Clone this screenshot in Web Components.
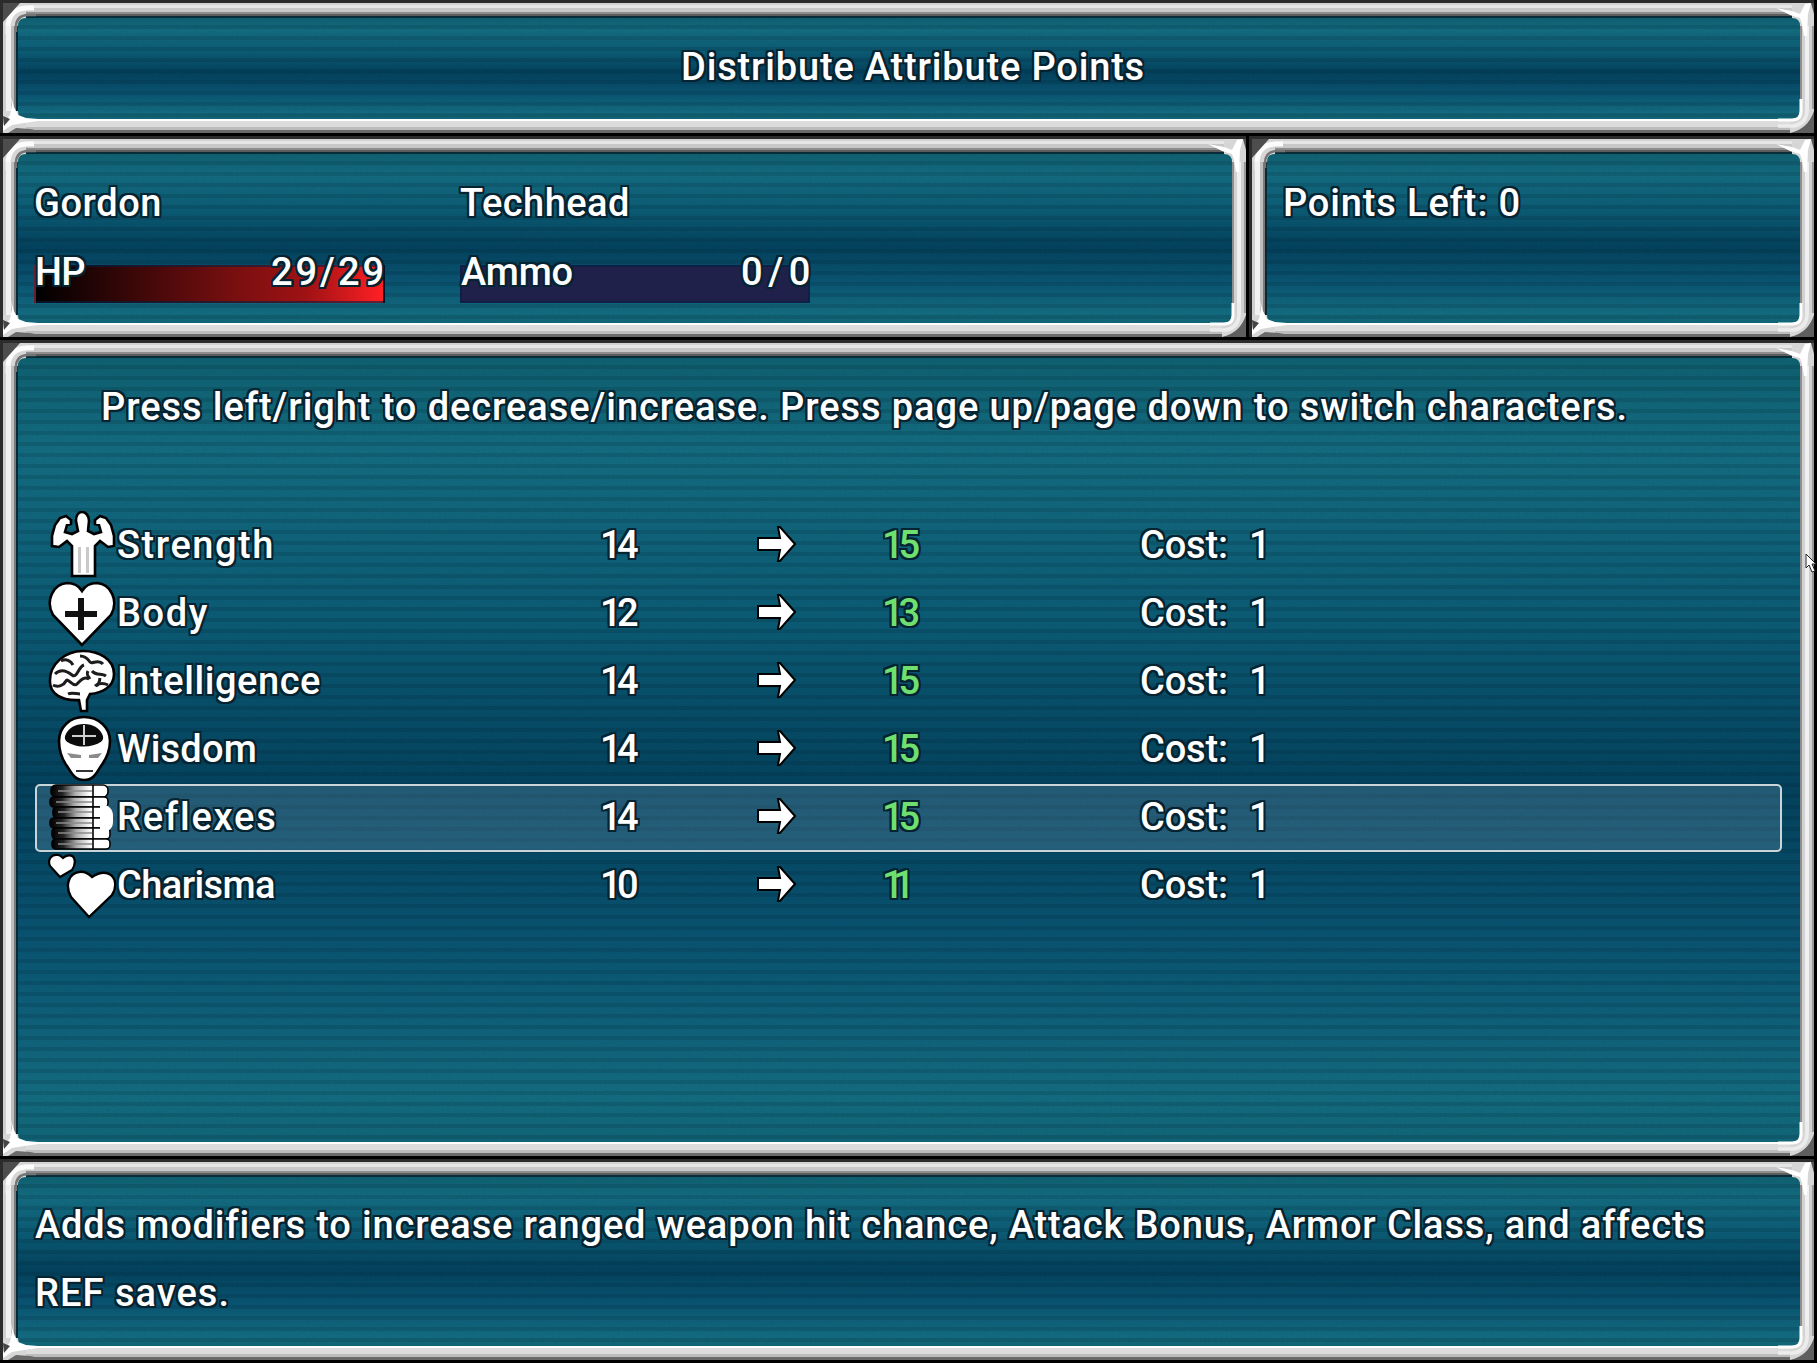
<!DOCTYPE html>
<html>
<head>
<meta charset="utf-8">
<title>Distribute Attribute Points</title>
<style>
  html, body { margin: 0; padding: 0; background: #000; }
  body {
    width: 1817px;
    height: 1363px;
    overflow: hidden;
    color: #fff;
    font: 500 38px Roboto, "Liberation Sans", sans-serif;
  }
  .screen {
    display: grid;
    grid-template-rows: 133px 201px 816px 201px;
    row-gap: 3px;
    width: 1814px;
  }
  .status {
    display: grid;
    grid-template-columns: 1246px 565px;
    column-gap: 3px;
  }
</style>
</head>
<body>
<div class="screen">
  <game-window>
    <div style="text-align:center;padding:27px 0 0 8px;line-height:44px"><game-text width="464">Distribute Attribute Points</game-text></div>
  </game-window>

  <div class="status">
    <game-window>
      <actor-status></actor-status>
    </game-window>
    <game-window>
      <div style="padding:27px 0 0 16px;line-height:44px"><game-text width="238">Points Left: 0</game-text></div>
    </game-window>
  </div>

  <game-window>
    <attr-list></attr-list>
  </game-window>

  <game-window>
    <div style="padding:14px 0 0 17px;line-height:68px">
      <div><game-text width="1670">Adds modifiers to increase ranged weapon hit chance, Attack Bonus, Armor Class, and affects</game-text></div>
      <div><game-text width="195">REF saves.</game-text></div>
    </div>
  </game-window>
</div>

<mouse-cursor></mouse-cursor>

<script>
// text with the dark halo of the game font, squeezed to the measured width
class GameText extends HTMLElement {
  constructor() {
    super();
    this.attachShadow({ mode: "open" }).innerHTML = `
      <style>
        :host {
          display: inline-block;
          white-space: nowrap;
          letter-spacing: var(--ls, 0);
          color: var(--text-color, #fff);
          text-shadow: 2px 0 0 #052330, -2px 0 0 #052330, 0 2px 0 #052330, 0 -2px 0 #052330,
            2px 2px 0 #052330, -2px -2px 0 #052330, 2px -2px 0 #052330, -2px 2px 0 #052330;
        }
      </style>
      <slot></slot>`;
  }
  connectedCallback() {
    const want = parseFloat(this.getAttribute("width"));
    if (!want) return;
    const len = this.textContent.length;
    const have = this.getBoundingClientRect().width;
    this.style.setProperty("--ls", ((want - have) / len).toFixed(3) + "px");
  }
}

// frame bands: [offset, thickness, colour]
const TOP = [[0, 3, "#2c2c2c"], [3, 2, "#d2d2d2"], [5, 3, "#e6e6e6"], [8, 4, "#c8c8c8"], [12, 2, "#8e8e8e"], [14, 2, "#5c5c5c"], [16, 2, "#0a2c38"]];
const LEFT = [[0, 3, "#2c2c2c"], [3, 3, "#cfcfcf"], [6, 5, "#f2f2f2"], [11, 3, "#bdbdbd"], [14, 2, "#7a7a7a"], [16, 2, "#082a36"]];
const RIGHT = [[0, 2, "#8f8f8f"], [2, 3, "#d2d2d2"], [5, 4, "#f0f0f0"], [9, 3, "#cfcfcf"], [12, 2, "#9a9a9a"]];
const BOTTOM = [[0, 2, "#fff"], [2, 6, "#dcdcdc"], [8, 3, "#bcbcbc"], [11, 3, "#6a6a6a"]];

const css = (bands, dir) =>
  `linear-gradient(${dir}, ${bands.map((b) => `${b[2]} ${b[0]}px ${b[0] + b[1]}px`).join(", ")})`;
const hBands = (bands, x, w, y0 = 0) =>
  bands.map((b) => `<rect x="${x}" y="${y0 + b[0]}" width="${w}" height="${b[1]}" fill="${b[2]}"/>`).join("");
const vBands = (bands, y, h, x0 = 0) =>
  bands.map((b) => `<rect x="${x0 + b[0]}" y="${y}" width="${b[1]}" height="${h}" fill="${b[2]}"/>`).join("");

const BLUR = `<defs><filter id="soft" x="-10%" y="-10%" width="120%" height="120%"><feGaussianBlur stdDeviation=".6"/></filter></defs>`;
const CORNERS = {
  tl: `${hBands(TOP, 24, 20)}${vBands(LEFT, 24, 20)}
    <path d="M3 3H26V18Q18 18 18 26H3Z" fill="#d6d6d6"/>
    <g filter="url(#soft)">
      <path d="M8 26Q9 9 26 8H34" fill="none" stroke="#fcfcfc" stroke-width="5"/>
      <path d="M8 26V34" stroke="#f2f2f2" stroke-width="5"/>
      <path d="M16 32V27Q16 16 27 15H36" fill="none" stroke="#757575" stroke-width="2.4"/>
      <path d="M3 3H20L3 22Z" fill="#4d4d4d"/>
    </g>
    <path d="M0 0H44V3H0ZM0 0H3V44H0Z" fill="#2c2c2c"/>`,
  tr: `${hBands(TOP, 0, 24)}${vBands(RIGHT, 24, 20, 30)}
    <path d="M22 3H44V26H30Q30 18 22 18Z" fill="#d6d6d6"/>
    <g filter="url(#soft)">
      <path d="M6 8L22 11L30 14L35 4L41 3L38 14L37 36H34L32 24L30 18L20 15Z" fill="#fff"/>
      <path d="M41 3H44V14Z" fill="#555"/>
    </g>
    <path d="M0 0H44V3H0Z" fill="#2c2c2c"/>`,
  bl: `${vBands(LEFT, 0, 24)}${hBands(BOTTOM, 24, 20, 30)}
    <path d="M3 22H18Q18 30 26 30V44H3Z" fill="#d6d6d6"/>
    <g filter="url(#soft)">
      <path d="M11 8L14 18L18 26L26 29L38 30V32L24 34L12 36L3 42V36L10 26L12 16Z" fill="#fff"/>
      <path d="M8 44L16 39L30 40L40 42V44Z" fill="#6a6a6a"/>
      <path d="M3 27L10 30L4 37Z" fill="#444"/>
    </g>
    <path d="M0 20H3V44H0Z" fill="#2c2c2c"/>`,
  br: `${vBands(RIGHT, 0, 22, 30)}${hBands(BOTTOM, 0, 22, 30)}
    <path d="M30 20H44V44H20V30H22Q30 30 30 22Z" fill="#d6d6d6"/>
    <g filter="url(#soft)">
      <path d="M8 31H22Q31 31 31 22V10" fill="none" stroke="#fff" stroke-width="3"/>
      <path d="M37 10V22Q36 36 22 37H8" fill="none" stroke="#ececec" stroke-width="3.6"/>
      <path d="M44 22V44H20Q38 40 44 22Z" fill="#5e5e5e"/>
    </g>`
};

class GameWindow extends HTMLElement {
  constructor() {
    super();
    const corner = (k) => `<svg class="c ${k}" viewBox="0 0 44 44" width="44" height="44">${BLUR}${CORNERS[k]}</svg>`;
    this.attachShadow({ mode: "open" }).innerHTML = `
      <style>
        :host {
          display: grid;
          position: relative;
          min-width: 0;
          min-height: 0;
          grid-template-columns: 18px 1fr 14px;
          grid-template-rows: 18px 1fr 14px;
        }
        .top { grid-column: 1 / 4; background: ${css(TOP, "180deg")}; }
        .left { background: ${css(LEFT, "90deg")}; }
        .right { background: ${css(RIGHT, "90deg")}; }
        .bottom { grid-column: 1 / 4; background: ${css(BOTTOM, "180deg")}; }
        .body {
          position: relative;
          min-width: 0;
          overflow: hidden;
          background:
            repeating-linear-gradient(rgba(0,18,32,0) 0 7px, rgba(0,18,32,.14) 7px 11px),
            linear-gradient(#0f5f6f 0%, #146a7e 12%, #0c5a73 33%, #04405b 55%, #0a5370 75%, #146a7e 94%, #116475 100%);
        }
        .noise { position: absolute; inset: 0; width: 100%; height: 100%; }
        .content { position: relative; height: 100%; }
        .c { position: absolute; z-index: 2; display: block; }
        .tl { left: 0; top: 0; }
        .tr { right: 0; top: 0; }
        .bl { left: 0; bottom: 0; }
        .br { right: 0; bottom: 0; }
      </style>
      <div class="top"></div>
      <div class="left"></div>
      <div class="body">
        <svg class="noise">
          <filter id="grain"><feTurbulence type="fractalNoise" baseFrequency=".38" numOctaves="1" seed="4"/><feColorMatrix values="0 0 0 0 0  0 0 0 0 .1  0 0 0 0 .16  1.6 0 0 0 -.7"/></filter>
          <rect width="100%" height="100%" filter="url(#grain)" opacity=".28"/>
        </svg>
        <div class="content"><slot></slot></div>
      </div>
      <div class="right"></div>
      <div class="bottom"></div>
      ${corner("tl")}${corner("tr")}${corner("bl")}${corner("br")}`;
  }
}

class StatBar extends HTMLElement {
  constructor() {
    super();
    this.attachShadow({ mode: "open" }).innerHTML = `
      <style>
        :host { display: block; position: relative; width: var(--w); height: 68px; }
        .track {
          position: absolute;
          left: 0;
          right: 0;
          top: 27px;
          height: 34px;
          border: 2px solid rgba(4, 32, 66, .6);
          background: var(--fill);
        }
        .row {
          position: relative;
          display: flex;
          justify-content: space-between;
          line-height: 44px;
          padding: 12px 2px 0 1px;
        }
      </style>
      <div class="track"></div>
      <div class="row"><slot name="label"></slot><slot name="value"></slot></div>`;
  }
}

class ActorStatus extends HTMLElement {
  constructor() {
    super();
    this.attachShadow({ mode: "open" }).innerHTML = `
      <style>
        :host {
          display: grid;
          grid-template-columns: 351px 350px;
          column-gap: 75px;
          row-gap: 13px;
          padding: 27px 0 0 16px;
          line-height: 44px;
        }
        stat-bar:first-of-type { --w: 351px; --fill: linear-gradient(90deg, #000, #7a0f10 58%, #a01214 78%, #ff2024); }
        stat-bar:last-of-type { --w: 350px; --fill: #20214a; }
      </style>
      <div><game-text width="128">Gordon</game-text></div>
      <div><game-text width="170">Techhead</game-text></div>
      <stat-bar>
        <game-text slot="label" width="50">HP</game-text>
        <game-text slot="value" width="116" style="margin-right:-4px">29/29</game-text>
      </stat-bar>
      <stat-bar>
        <game-text slot="label" width="112">Ammo</game-text>
        <game-text slot="value" width="75" style="margin-right:-8px">0/0</game-text>
      </stat-bar>`;
  }
}

const ICONS = {
  strength: `<path d="M34 1C38 1 41 5 41 10L40 20L46 23L53 21L51 14L47 13L47 9L52 5L58 7L63 14L66 25L66 35L60 36L52 30L47 35L47 65H24L24 35L19 30L11 36L4 35L4 25L7 14L12 7L18 5L23 9L23 13L19 14L17 21L24 23L30 20L28 10C28 5 30 1 34 1Z" fill="#fff" stroke="#000" stroke-width="2.6"/>
    <path d="M30 36h3v26h-3ZM38 36h3v26h-3Z" fill="#c9c9c9"/>`,
  body: `<path d="M34 66 5 36C-3 22 5 5 19 4c7 0 12 3 15 8 3-5 8-8 15-8 14 1 22 18 14 32Z" fill="#fff" stroke="#000" stroke-width="2.6"/>
    <path d="M30 19h6v13h13v6H36v13h-6V38H17v-6h13Z" fill="#111"/>`,
  intelligence: `<path d="M33 64l-2-11C14 54 1 47 2 33 2 18 16 4 35 4c16 0 31 8 31 23 0 13-12 19-24 20l-3 6 0 11Z" fill="#fff" stroke="#000" stroke-width="2.6"/>
    <g fill="none" stroke="#1d1d1d" stroke-width="3">
      <path d="M7 27c6-6 12-3 17 1s6-8 12-10"/><path d="M13 14c5-3 10 0 12 4"/><path d="M32 9c5 0 8 3 10 6s8-4 13 2"/>
      <path d="M5 38c5 3 11 0 13-4s7 7 11 3 7-8 12-5"/><path d="M44 24c4 5 10 2 14 5"/><path d="M47 39c3-3 9-3 13-1"/><path d="M20 47c4-2 8 0 12 0"/><path d="M40 24c-2 4 0 5 2 8"/><path d="M52 31c-1 4 0 6-4 8"/>
    </g>`,
  wisdom: `<path d="M36 2C22 2 11 12 11 26c0 10 2 17 8 25 4 6 7 14 17 14s13-8 17-14c6-8 9-15 9-25C62 12 50 2 36 2Z" fill="#fff" stroke="#000" stroke-width="2.6"/>
    <path d="M17 21c3-8 10-12 19-12s16 4 19 12c1 5-3 7-9 9-7 2-14 2-20 0-6-2-10-4-9-9Z" fill="#0b0b0b"/>
    <path d="M35 10h2v10h11v2H37v8h-2v-8H24v-2h11Z" fill="#cfcfcf"/>
    <path d="M19 38l14 2v3H23ZM54 38l-13 2v3h9Z" fill="#8a8a8a"/>
    <path d="M28 55h17v2H28Z" fill="#333"/>`,
  reflexes: `<defs><linearGradient id="coil"><stop offset="0" stop-color="#000"/><stop offset=".2" stop-color="#222"/><stop offset=".42" stop-color="#aaa"/><stop offset=".68" stop-color="#fff"/></linearGradient></defs>
    <g stroke="#000" stroke-width="1.6" fill="url(#coil)">
      <rect x="3" y="2" width="57" height="12" rx="5"/><rect x="2" y="14" width="58" height="10" rx="4"/><rect x="5" y="24" width="56" height="11" rx="4"/><rect x="2" y="35" width="60" height="10" rx="4"/><rect x="4" y="45" width="58" height="11" rx="4"/><rect x="4" y="56" width="58" height="10" rx="4"/>
    </g>
    <path d="M10 8h34M8 19h36M10 29h34M8 40h36M10 50h34M10 61h34" stroke="#8a8a8a" stroke-width="1.6"/>
    <path d="M45 2v64" stroke="#000" stroke-width="1.6"/>
    <path d="M52 22c8-1 13 4 13 11v6c0 7-6 11-13 10Z" fill="#fff"/>`,
  charisma: `<path d="M12 26 2 15C-1 8 4 3 10 4c2 0 4 2 5 3 3-3 9-4 11 0 2 5 0 9-2 12Z" fill="#fff" stroke="#000" stroke-width="2.2"/>
    <path d="M41 66 23 46C16 33 22 22 31 21c6-1 10 2 13 5 6-4 13-6 19-2 6 5 5 14 1 20Z" fill="#fff" stroke="#000" stroke-width="2.4"/>`
};

class AttrRow extends HTMLElement {
  constructor() {
    super();
    this.attachShadow({ mode: "open" });
  }
  connectedCallback() {
    const a = (n) => this.getAttribute(n);
    this.shadowRoot.innerHTML = `
      <style>
        :host {
          display: grid;
          position: relative;
          height: 68px;
          grid-template-columns: 69px 483px 157px 125px 258px 1fr;
          grid-template-rows: 65px;
          align-items: center;
          padding: 0 0 3px 30px;
          line-height: 60px;
          box-sizing: border-box;
        }
        :host([selected]) .sel { display: block; }
        .sel {
          display: none;
          position: absolute;
          left: 17px;
          top: 0;
          width: 1743px;
          height: 64px;
          border: 2px solid #c8d6da;
          border-radius: 5px;
          background: rgba(190, 215, 235, .17);
        }
        svg { position: relative; z-index: 1; display: block; }
        game-text { position: relative; z-index: 1; }
        .new { --text-color: #6fe06f; }
        .cost { display: flex; gap: 21px; }
      </style>
      <div class="sel"></div>
      <svg viewBox="0 0 68 68" width="68" height="68">${ICONS[a("icon")]}</svg>
      <div><game-text width="${a("w")}">${a("name")}</game-text></div>
      <div><game-text width="34">${a("from")}</game-text></div>
      <div style="display:flex"><svg viewBox="0 0 39 36" width="39" height="36" style="margin:-2px 0 0"><path d="M21 1h2l15 17-15 17h-2l2-11H1V12h22Z" fill="#fff" stroke="#000" stroke-width="2"/></svg></div>
      <div class="new"><game-text width="${a("to") === "11" ? 22 : 33}">${a("to")}</game-text></div>
      <div class="cost"><game-text width="88">Cost:</game-text><game-text width="11">1</game-text></div>`;
  }
}

class AttrList extends HTMLElement {
  constructor() {
    super();
    const rows = [
      ["strength", "Strength", 14, 15, 158, ""],
      ["body", "Body", 12, 13, 92, ""],
      ["intelligence", "Intelligence", 14, 15, 204, ""],
      ["wisdom", "Wisdom", 14, 15, 140, ""],
      ["reflexes", "Reflexes", 14, 15, 160, "selected"],
      ["charisma", "Charisma", 10, 11, 158, ""]
    ];
    this.attachShadow({ mode: "open" }).innerHTML = `
      <style>
        :host { display: block; line-height: 44px; }
        .help { padding: 27px 0 0 83px; height: 127px; }
      </style>
      <div class="help"><game-text width="1527">Press left/right to decrease/increase. Press page up/page down to switch characters.</game-text></div>
      ${rows.map((r) => `<attr-row icon="${r[0]}" name="${r[1]}" from="${r[2]}" to="${r[3]}" w="${r[4]}" ${r[5]}></attr-row>`).join("")}`;
  }
}

class MouseCursor extends HTMLElement {
  constructor() {
    super();
    this.attachShadow({ mode: "open" }).innerHTML = `
      <style>
        :host { position: fixed; left: 1805px; top: 553px; width: 12px; height: 20px; z-index: 5; }
        svg { display: block; }
      </style>
      <svg viewBox="0 0 12 20" width="12" height="20"><path d="M1 1v14l3-3 3 7 3-1-3-7h4Z" fill="#fff" stroke="#222" stroke-width="1"/></svg>`;
  }
}

customElements.define("game-text", GameText);
customElements.define("game-window", GameWindow);
customElements.define("stat-bar", StatBar);
customElements.define("actor-status", ActorStatus);
customElements.define("attr-row", AttrRow);
customElements.define("attr-list", AttrList);
customElements.define("mouse-cursor", MouseCursor);
</script>
</body>
</html>
